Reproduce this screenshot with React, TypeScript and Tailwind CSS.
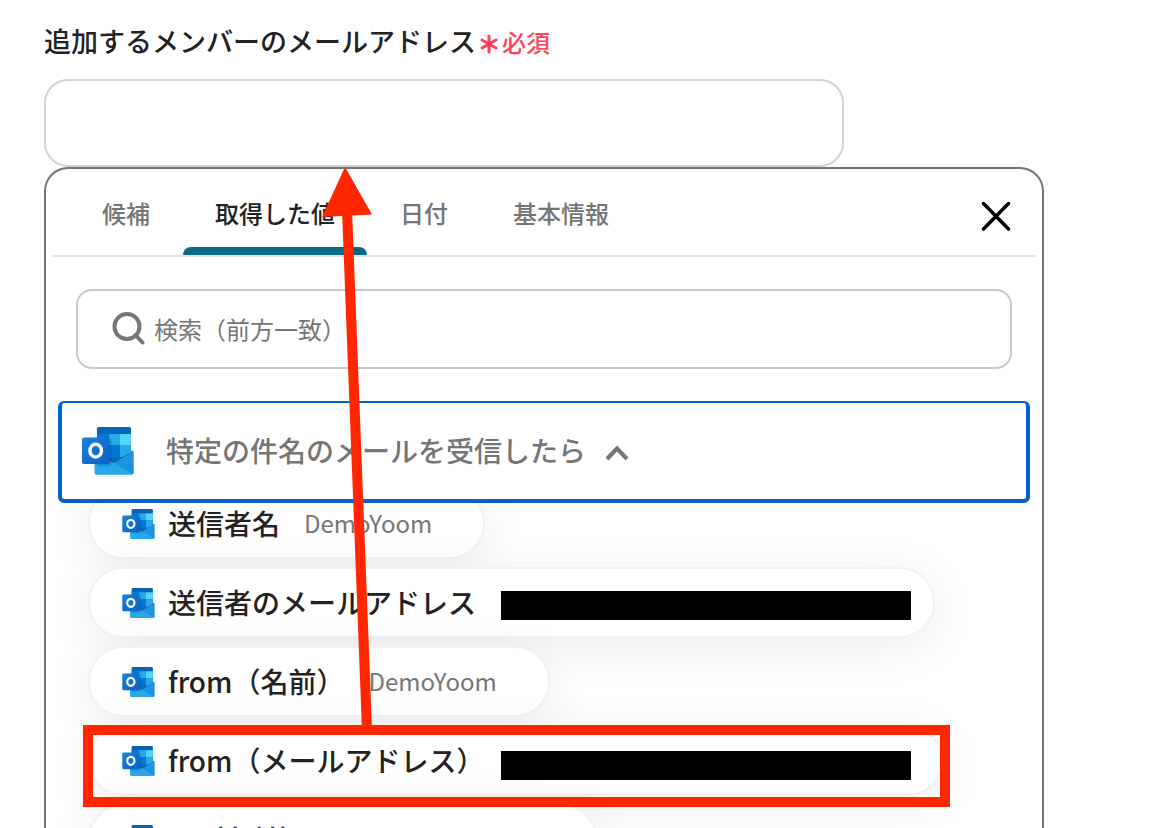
import { useState } from "react";

type Chip = { label: string; value?: string };

const tabs = ["候補", "取得した値", "日付", "基本情報"];

const chips: Chip[] = [
  { label: "送信者名", value: "DemoYoom" },
  { label: "送信者のメールアドレス" },
  { label: "from（名前）", value: "DemoYoom" },
  { label: "from（メールアドレス）" },
  { label: "to（名前）", value: "ex 取りまとめメモ1" },
];

function OutlookIcon({ className }: { className: string }) {
  return (
    <svg viewBox="0 0 52 48" className={className} aria-hidden="true">
      <defs>
        <linearGradient id="tile" x1="0" y1="0" x2="1" y2="1">
          <stop offset="0" stopColor="#1784d9" />
          <stop offset="1" stopColor="#0a5fc4" />
        </linearGradient>
        <linearGradient id="flap" x1="0" y1="0" x2="0" y2="1">
          <stop offset="0" stopColor="#2a94dc" />
          <stop offset="1" stopColor="#1490df" />
        </linearGradient>
      </defs>
      <path d="M12.5 26 51.5 24.5V46a1.8 1.8 0 0 1-1.8 1.8H14.3a1.8 1.8 0 0 1-1.8-1.8z" fill="#28a8ea" />
      <path d="M15 7h34v19L32 36 15 27z" fill="#0a6cc4" />
      <path d="M16.5 0h31A1.5 1.5 0 0 1 49 1.5V7.5H15V1.5A1.5 1.5 0 0 1 16.5 0z" fill="#0364b8" />
      <path d="M15 7h12v11H15z" fill="#0078d4" />
      <path d="M27 7h11v11H27z" fill="#28a8ea" />
      <path d="M38 7h11v11H38z" fill="#50d9ff" />
      <path d="M15 18h12v11H15z" fill="#0364b8" />
      <path d="M27 18h11v12H27z" fill="#0078d4" />
      <path d="M38 18h11v8l-8 4h-3z" fill="#28a8ea" />
      <path d="M27 30h13l-8 5-5-2z" fill="#1068b8" />
      <path d="M51.5 24.5 32 35.8l19 11.4.5-1.2z" fill="url(#flap)" />
      <path d="m51.5 24.5-2-1.5v2L32 35l-5-3v1.5l5 2.3z" fill="#0a4a8a" opacity=".7" />
      <path d="M15 12h12.500a2 2 0 0 1 2 2v23a2 2 0 0 1-2 2H15z" fill="#003b73" opacity=".25" />
      <rect x="0" y="10.500" width="27.500" height="26.500" rx="2" fill="url(#tile)" />
      <ellipse cx="13.700" cy="23.700" rx="5.800" ry="6.400" fill="none" stroke="#fff" strokeWidth="3.400" />
    </svg>
  );
}

export default function App() {
  const [active, setActive] = useState(1);
  const [open, setOpen] = useState(true);

  return (
    <div className="relative flex h-screen flex-col overflow-hidden bg-white px-11 pt-[23px] font-['Noto_Sans_CJK_JP',sans-serif] text-[#222222]">
      <div className="flex h-9 items-center gap-1">
        <label htmlFor="member-email" className="text-[27px] leading-9 font-medium whitespace-nowrap">
          追加するメンバーのメールアドレス
        </label>
        <span className="flex items-center gap-1 pt-0.5 text-2xl leading-8 font-medium text-[#ff4359]">
          <svg viewBox="0 0 18 20" className="mt-1 h-5 w-[18px]" fill="none" stroke="currentColor" strokeWidth="3" strokeLinecap="round" aria-hidden="true">
            <path d="M9 2v16M2 6l14 8M16 6 2 14" />
          </svg>
          必須
        </span>
      </div>

      <input
        id="member-email"
        type="text"
        className="mt-5 h-22 w-full max-w-[800px] shrink-0 rounded-3xl border-2 border-[#cfd3da] px-6 text-2xl outline-none"
      />

      <section className="flex min-h-0 w-full max-w-[1000px] flex-1 flex-col overflow-hidden rounded-t-3xl border-2 border-b-0 border-[#757575] bg-white">
        <div className="mx-1.5 flex h-22 shrink-0 items-stretch justify-between border-b-2 border-[#e4e4e4] pr-5 pl-[18px]">
          <div role="tablist" className="flex gap-px">
            {tabs.map((tab, i) => (
              <button
                key={tab}
                type="button"
                role="tab"
                aria-selected={i === active}
                onClick={() => setActive(i)}
                className={`flex flex-col items-stretch justify-between pt-[26px] text-2xl leading-9 font-medium whitespace-nowrap ${i === active ? "text-[#222222]" : "text-[#757575]"}`}
              >
                <span className="px-8">{tab}</span>
                <span className={`h-2 rounded-t-lg ${i === active ? "bg-[#0a6a85]" : "bg-transparent"}`} />
              </button>
            ))}
          </div>
          <button type="button" aria-label="閉じる" className="flex items-center pt-2 text-black">
            <svg viewBox="0 0 40 40" className="size-10" fill="none" stroke="currentColor" strokeWidth="3.500" strokeLinecap="round" aria-hidden="true">
              <path d="m7.500 7.500 25 25.500M32.500 7.500l-25 25.500" />
            </svg>
          </button>
        </div>

        <div className="mx-[30px] mt-8 flex h-20 shrink-0 items-center gap-[9px] rounded-2xl border-2 border-[#c8c8c8] pr-6 pb-0.5 pl-[33px]">
          <svg viewBox="0 0 34 34" className="size-[34px] shrink-0 text-[#757575]" fill="none" stroke="currentColor" strokeWidth="4" aria-hidden="true">
            <circle cx="16" cy="15.500" r="12.500" />
            <path d="m24.500 24 7 7.500" strokeLinecap="round" />
          </svg>
          <input
            type="text"
            aria-label="検索（前方一致）"
            placeholder="検索（前方一致）"
            className="h-9 min-w-0 flex-1 text-2xl outline-none placeholder:text-[#757575]"
          />
        </div>

        <button
          type="button"
          aria-expanded={open}
          onClick={() => setOpen(!open)}
          className="relative z-10 mx-3 mt-8 flex h-[102px] shrink-0 items-center rounded-md border-4 border-t-2 border-[#0560ce] bg-white pl-5 text-left"
        >
          <OutlookIcon className="h-12 w-[52px]" />
          <span className="ml-8 pb-0.5 text-[28px] leading-10 font-medium whitespace-nowrap text-[#757575]">
            特定の件名のメールを受信したら
          </span>
          <svg viewBox="0 0 24 16" className="mt-1 ml-[19px] h-4 w-6" fill="none" stroke="#757575" strokeWidth="4" aria-hidden="true">
            <path d="M2 14 12 3.500 22 14" />
          </svg>
        </button>

        {open && (
          <ul className="-mt-[15px] flex min-h-0 flex-1 flex-col items-start gap-2 overflow-hidden pl-[42px]">
            {chips.map((chip) => (
              <li key={chip.label} className="shrink-0">
                <button
                  type="button"
                  className="flex h-[71px] items-center rounded-full border-2 border-[#f2f2f2] bg-white pr-[51px] pl-8 shadow-[0_8px_48px_rgba(0,0,0,0.08)]"
                >
                  <OutlookIcon className="h-[30px] w-[33px]" />
                  <span className="ml-[13px] pb-0.5 text-[28px] leading-10 font-medium whitespace-nowrap">{chip.label}</span>
                  <span className="ml-6 pb-0.5 text-2xl leading-9 whitespace-nowrap text-[#757575]">
                    {chip.value ?? <span className="block w-[382px]" />}
                  </span>
                </button>
              </li>
            ))}
          </ul>
        )}
      </section>

      <svg viewBox="0 0 1150 828" className="pointer-events-none absolute top-0 left-0 z-20 h-[828px] w-[1150px]" aria-hidden="true">
        <rect x="501" y="591" width="410" height="29" fill="#000" />
        <rect x="501" y="751" width="410" height="29" fill="#000" />
        <rect x="88" y="730" width="857" height="72" fill="none" stroke="#ff2600" strokeWidth="10" />
        <path d="M367 730 347 210" stroke="#ff2600" strokeWidth="10" />
        <path d="m345 167 27 47.500-50 2.500z" fill="#ff2600" />
      </svg>
    </div>
  );
}
